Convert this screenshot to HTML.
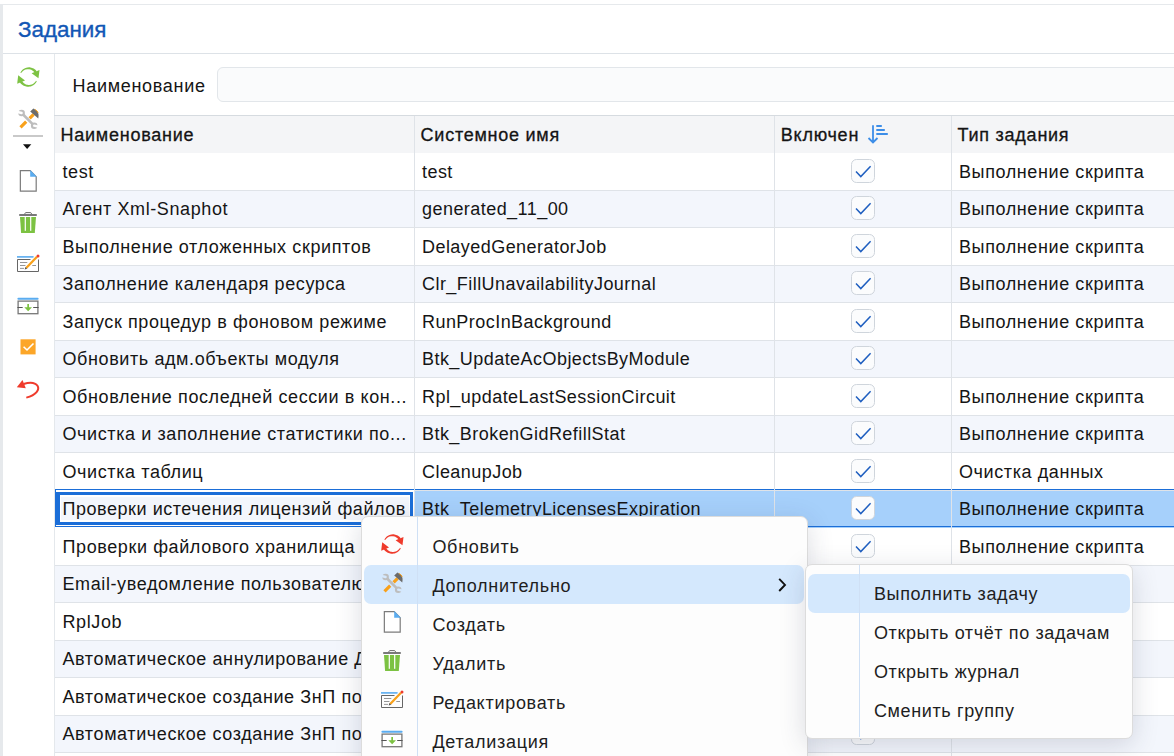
<!DOCTYPE html>
<html><head><meta charset="utf-8">
<style>
*{box-sizing:border-box;margin:0;padding:0}
html,body{width:1174px;height:756px;overflow:hidden;background:#fff}
body{position:relative;font-family:"Liberation Sans",sans-serif;color:#151515}
.abs{position:absolute}
#topline{left:0;top:4px;width:1174px;height:1px;background:#e6e9ec}
#leftstrip{left:0;top:4px;width:3px;height:752px;background:#e6e9ec}
#title{left:18px;top:18px;font-size:22.4px;line-height:24px;color:#1257b5;letter-spacing:0px;-webkit-text-stroke:0.35px #1257b5}
#hsep{left:3px;top:53px;width:1171px;height:1px;background:#dde2e7}
#vsep{left:54px;top:54px;width:1px;height:702px;background:#e4e8ec}
#flabel{left:72.5px;top:76px;font-size:18px;line-height:20px;letter-spacing:0.7px}
#finput{left:217.3px;top:67.2px;width:1000px;height:35px;border:1px solid #e2e6ea;border-radius:6px;background:#fafbfc}
#tline{left:54px;top:115px;width:1120px;height:1px;background:#d6dbe0}
#thead{left:55px;top:116px;width:1119px;height:36.8px;background:#f4f5f7}
.th{position:absolute;top:9.3px;font-size:18px;line-height:20px;font-weight:normal;color:#141414;letter-spacing:0.75px;-webkit-text-stroke:0.3px #141414}
.colsep{position:absolute;top:116px;width:1px;height:640px;background:#dfe3e8}
.row{position:absolute;left:55px;width:1119px;height:37.5px;border-bottom:1px solid #dfe3e8;background:#fff}
.row.alt{background:#f3f6fc}
.row > div{position:absolute;top:0;height:36.5px;font-size:18px;line-height:20px;letter-spacing:0.6px;white-space:nowrap;overflow:hidden}
.row span{position:absolute;top:8.6px}
.c1{left:0;width:359px}
.c1 span{left:7.5px}
.c2{left:360px;width:359px}
.c2 span{left:7px;letter-spacing:0.45px}
.c3{left:720px;width:176px}
.c4{left:897px;width:222px}
.c4 span{left:7px}
.cb{position:absolute;left:76.2px;top:5.5px;width:23.5px;height:24px;border:1.4px solid #cfd5dc;border-radius:5.5px;background:#fbfcfd}
.cb svg{position:absolute;left:-1.4px;top:-1.4px}
.row.sel{background:#a6d0fb;border-bottom:none}
.row.sel .c1{background:#fff;left:0;top:-1.3px;width:360px;height:38.8px}
.row.sel .c1 .focus{position:absolute;left:1px;top:2px;width:357px;height:33.6px;border:3px solid #1b6ed8;border-left-width:4px;background:#f3f6fc;box-shadow:inset 1px 2px 0 0 #fff,inset -1px -2px 0 0 #fff}
.row.sel .c1 span{z-index:1;top:9.1px;letter-spacing:0.54px}
.row.sel .c2 span,.row.sel .c4 span{top:8px}
.row.sel .cb{top:5.6px}
.selline{position:absolute;left:55px;width:1119px;height:1px;background:#1b6ed8}
.ico{position:absolute;width:30px;height:30px}
#menu{left:360.9px;top:516.3px;width:447px;height:300px;background:#fdfdfd;border:1px solid #dcdcdc;border-radius:7px;box-shadow:0 6px 26px rgba(40,50,80,0.17)}
#menu .msep{position:absolute;left:55px;top:0;width:1px;height:300px;background:#cfe0f5}
.mi{position:absolute;font-size:18px;line-height:20px;letter-spacing:0.72px;color:#1e1e1e;white-space:nowrap}
#sub .mi{letter-spacing:0.62px}
.hl{position:absolute;background:#d4e8fd;border-radius:7px}
#sub{left:804.7px;top:563.6px;width:328.5px;height:175px;background:#fdfdfd;border:1px solid #dcdcdc;border-radius:7px;box-shadow:0 6px 26px rgba(40,50,80,0.17)}
#sub .msep{position:absolute;left:53.7px;top:0;width:1px;height:172px;background:#cfe0f5}
</style></head><body>
<svg width="0" height="0" style="position:absolute">
<defs>
<symbol id="i-refresh" viewBox="0 0 30 30">
 <path d="M6.38,10.68 L6.75,9.98 L7.18,9.31 L7.67,8.68 L8.21,8.09 L8.80,7.55 L9.44,7.06 L10.13,6.63 L10.85,6.25 L11.60,5.93 L12.38,5.68 L13.18,5.50 L14.00,5.39 L14.82,5.34 L15.65,5.37 L16.48,5.47 L17.30,5.64 L18.11,5.89 L18.89,6.20 L19.65,6.57 L20.37,7.02 L21.06,7.52 L21.70,8.09 L22.29,8.71 L22.83,9.38 L20.68,10.83 L20.32,10.30 L19.93,9.79 L19.48,9.32 L19.00,8.88 L18.48,8.49 L17.92,8.14 L17.33,7.84 L16.72,7.59 L16.08,7.39 L15.43,7.25 L14.76,7.16 L14.09,7.14 L13.41,7.16 L12.74,7.25 L12.07,7.40 L11.41,7.60 L10.77,7.86 L10.15,8.18 L9.56,8.55 L9.01,8.97 L8.48,9.44 L8.00,9.95 L7.56,10.51 L7.17,11.10 Z" fill="currentColor"/>
 <path d="M17.6,11.3 L25.5,8.1 L24.5,16.3 Z" fill="currentColor"/>
 <path d="M22.79,19.22 L22.41,19.96 L21.97,20.66 L21.46,21.32 L20.90,21.94 L20.28,22.51 L19.61,23.02 L18.90,23.48 L18.14,23.86 L17.35,24.19 L16.53,24.44 L15.69,24.62 L14.84,24.72 L13.98,24.75 L13.11,24.70 L12.25,24.57 L11.40,24.37 L10.56,24.09 L9.76,23.73 L8.98,23.31 L8.25,22.81 L7.55,22.26 L6.91,21.63 L6.33,20.96 L5.80,20.23 L8.03,18.89 L8.37,19.47 L8.76,20.02 L9.21,20.53 L9.69,21.01 L10.23,21.44 L10.80,21.82 L11.40,22.16 L12.04,22.44 L12.70,22.66 L13.38,22.82 L14.07,22.93 L14.78,22.97 L15.49,22.95 L16.20,22.87 L16.90,22.72 L17.58,22.51 L18.25,22.24 L18.90,21.91 L19.52,21.52 L20.10,21.07 L20.64,20.58 L21.14,20.03 L21.59,19.44 L21.98,18.81 Z" fill="currentColor"/>
 <path d="M4.2,13.2 L11,18.6 L3.2,21.8 Z" fill="currentColor"/>
</symbol>
<mask id="m-wr" maskUnits="userSpaceOnUse" x="0" y="0" width="30" height="30">
 <rect x="0" y="0" width="30" height="30" fill="#fff"/>
 <path d="M2,7.8 H7.6 A1.2,1.2 0 0 1 7.6,10.2 H2 Z" fill="#000" transform="rotate(15 7.6 9)"/>
 <path d="M26,20.5 H20.2 A1.2,1.2 0 0 0 20.2,22.9 H26 Z" fill="#000" transform="rotate(15 20.2 21.7)"/>
</mask>
<symbol id="i-tools" viewBox="0 0 30 30">
 <path d="M6.5,23.4 L12.2,17.7 M15.6,14.3 L19.6,10.3" stroke="#f8a11b" stroke-width="3.2" fill="none"/>
 <path d="M16.2,7.6 L19.4,4.6 L23.2,6.9 Q25.2,9.8 24.3,14.6 Z" fill="#6b6b6b"/>
 <path d="M20.9,5.4 Q23.6,6.8 24.2,9" stroke="#f8a11b" stroke-width="1" fill="none"/>
 <g fill="#bdbdbd" mask="url(#m-wr)">
  <path d="M8.6,10 L18.9,20.3" stroke="#bdbdbd" stroke-width="2.6"/>
  <circle cx="7.6" cy="9" r="3.3"/>
  <circle cx="20.2" cy="21.7" r="3.3"/>
 </g>
</symbol>
<symbol id="i-doc" viewBox="0 0 30 30">
 <path d="M6.35,4.6 H16.2 L22.2,10.7 V25.2 H6.35 Z" fill="#fff" stroke="#7b7b7b" stroke-width="1.2"/>
 <path d="M16.2,4 V10.7 H22.8 Z" fill="#5aacf0"/>
</symbol>
<symbol id="i-trash" viewBox="0 0 30 30">
 <rect x="5.2" y="7.1" width="17.6" height="1.8" fill="#6b6b6b"/>
 <path d="M10.5,7.2 L11.6,5.6 H16.7 L17.8,7.2" fill="none" stroke="#6b6b6b" stroke-width="1"/>
 <path d="M6,9.9 H22 L20.8,26 H7.1 Z" fill="#7cc242"/>
 <rect x="10.7" y="9.9" width="1.2" height="13.9" fill="#fff"/>
 <rect x="16.1" y="9.9" width="1.2" height="13.9" fill="#fff"/>
</symbol>
<symbol id="i-edit" viewBox="0 0 30 30">
 <rect x="3" y="8.1" width="16.6" height="1.6" fill="#5aacf0"/>
 <path d="M16.5,11.5 H3.5 V23.5 H24.5 V11.5" fill="none" stroke="#666" stroke-width="1"/>
 <path d="M6,14.5 H13.3 M6,17.5 H11.5 M18.3,17.5 H22 M6,20.4 H10" stroke="#8a8a8a" stroke-width="0.9"/>
 <path d="M12.2,20 L23,8.8" stroke="#fff" stroke-width="3.6"/><path d="M12.2,20 L23,8.8" stroke="#f8a11b" stroke-width="2.3"/>
 <path d="M10.7,21.4 L11.3,18.9 L13.2,20.8 Z" fill="#555"/>
 <circle cx="24" cy="7.9" r="1.5" fill="#ee3a2d"/>
</symbol>
<symbol id="i-detail" viewBox="0 0 30 30">
 <rect x="3.4" y="7.7" width="21.2" height="2" rx="1" fill="#5aacf0"/>
 <rect x="4.1" y="11.1" width="19.8" height="12.6" fill="#fff" stroke="#777" stroke-width="1.3"/>
 <path d="M3.4,17.5 H8.7 M19.2,17.5 H24.6" stroke="#555" stroke-width="1"/>
 <path d="M13.3,13.9 H15 V17.2 H18 L14.15,21.2 L10.3,17.2 H13.3 Z" fill="#7cc242"/>
</symbol>
<symbol id="i-check" viewBox="0 0 30 30">
 <rect x="6.5" y="7.3" width="15.1" height="15.1" fill="#fca628"/>
 <path d="M9.6,14.7 L13,18 L19.5,11.5" fill="none" stroke="#fff" stroke-width="1.6"/>
</symbol>
<symbol id="i-undo" viewBox="0 0 30 30">
 <path d="M2.8,13.3 L8.5,6.1 L11.8,14.3 Z" fill="#ef3b2c"/>
 <path d="M9.5,10 C15,8.3 21,8.2 23.5,11.8 C25.8,15.5 22.5,21 12.3,23.6" fill="none" stroke="#ef3b2c" stroke-width="2"/>
</symbol>
</defs></svg>

<div id="topline" class="abs"></div>
<div id="leftstrip" class="abs"></div>
<div id="title" class="abs">Задания</div>
<div id="hsep" class="abs"></div>
<div id="vsep" class="abs"></div>

<svg class="ico" style="left:14px;top:62px;color:#7dc243"><use href="#i-refresh"/></svg>
<svg class="ico" style="left:14px;top:104px"><use href="#i-tools"/></svg>
<div class="abs" style="left:13px;top:135.3px;width:30px;height:2px;background:#c9c9c9"></div>
<svg class="abs" style="left:22px;top:143px" width="10" height="7" viewBox="0 0 10 7"><path d="M1,1.3 H9.3 L5.15,6 Z" fill="#111"/></svg>
<svg class="ico" style="left:14px;top:166px"><use href="#i-doc"/></svg>
<svg class="ico" style="left:14px;top:207px"><use href="#i-trash"/></svg>
<svg class="ico" style="left:14px;top:248px"><use href="#i-edit"/></svg>
<svg class="ico" style="left:14px;top:290px"><use href="#i-detail"/></svg>
<svg class="ico" style="left:14px;top:332px"><use href="#i-check"/></svg>
<svg class="ico" style="left:14px;top:374px"><use href="#i-undo"/></svg>

<div id="flabel" class="abs">Наименование</div>
<div id="finput" class="abs"></div>

<div id="tline" class="abs"></div>
<div id="thead" class="abs">
 <div class="th" style="left:5.5px">Наименование</div>
 <div class="th" style="left:365.6px">Системное имя</div>
 <div class="th" style="left:725.8px">Включен</div>
 <svg class="abs" style="left:810px;top:8px" width="24" height="22" viewBox="0 0 24 22"><path d="M8,1.2 V18.5 M3.5,14 L8,18.5 L12.5,14" stroke="#3d8ee8" stroke-width="1.8" fill="none"/><path d="M11.3,2 H16.8 M11.3,6 H19.8 M11.3,10 H22.8" stroke="#3d8ee8" stroke-width="1.8" fill="none"/></svg>
 <div class="th" style="left:902.6px">Тип задания</div>
</div>

<div class="row" style="top:153.4px">
<div class="c1"><span>test</span></div>
<div class="c2"><span>test</span></div>
<div class="c3"><div class="cb"><svg width="24" height="24" viewBox="0 0 24 24"><path d="M5,12.6 L9.8,17.6 L19.6,7.3" fill="none" stroke="#1f5fc0" stroke-width="1.5"/></svg></div></div>
<div class="c4"><span>Выполнение скрипта</span></div>
</div>
<div class="row alt" style="top:190.9px">
<div class="c1"><span>Агент Xml-Snaphot</span></div>
<div class="c2"><span>generated_11_00</span></div>
<div class="c3"><div class="cb"><svg width="24" height="24" viewBox="0 0 24 24"><path d="M5,12.6 L9.8,17.6 L19.6,7.3" fill="none" stroke="#1f5fc0" stroke-width="1.5"/></svg></div></div>
<div class="c4"><span>Выполнение скрипта</span></div>
</div>
<div class="row" style="top:228.4px">
<div class="c1"><span>Выполнение отложенных скриптов</span></div>
<div class="c2"><span>DelayedGeneratorJob</span></div>
<div class="c3"><div class="cb"><svg width="24" height="24" viewBox="0 0 24 24"><path d="M5,12.6 L9.8,17.6 L19.6,7.3" fill="none" stroke="#1f5fc0" stroke-width="1.5"/></svg></div></div>
<div class="c4"><span>Выполнение скрипта</span></div>
</div>
<div class="row alt" style="top:265.9px">
<div class="c1"><span>Заполнение календаря ресурса</span></div>
<div class="c2"><span>Clr_FillUnavailabilityJournal</span></div>
<div class="c3"><div class="cb"><svg width="24" height="24" viewBox="0 0 24 24"><path d="M5,12.6 L9.8,17.6 L19.6,7.3" fill="none" stroke="#1f5fc0" stroke-width="1.5"/></svg></div></div>
<div class="c4"><span>Выполнение скрипта</span></div>
</div>
<div class="row" style="top:303.4px">
<div class="c1"><span>Запуск процедур в фоновом режиме</span></div>
<div class="c2"><span>RunProcInBackground</span></div>
<div class="c3"><div class="cb"><svg width="24" height="24" viewBox="0 0 24 24"><path d="M5,12.6 L9.8,17.6 L19.6,7.3" fill="none" stroke="#1f5fc0" stroke-width="1.5"/></svg></div></div>
<div class="c4"><span>Выполнение скрипта</span></div>
</div>
<div class="row alt" style="top:340.9px">
<div class="c1"><span>Обновить адм.объекты модуля</span></div>
<div class="c2"><span>Btk_UpdateAcObjectsByModule</span></div>
<div class="c3"><div class="cb"><svg width="24" height="24" viewBox="0 0 24 24"><path d="M5,12.6 L9.8,17.6 L19.6,7.3" fill="none" stroke="#1f5fc0" stroke-width="1.5"/></svg></div></div>
<div class="c4"><span></span></div>
</div>
<div class="row" style="top:378.4px">
<div class="c1"><span>Обновление последней сессии в кон...</span></div>
<div class="c2"><span>Rpl_updateLastSessionCircuit</span></div>
<div class="c3"><div class="cb"><svg width="24" height="24" viewBox="0 0 24 24"><path d="M5,12.6 L9.8,17.6 L19.6,7.3" fill="none" stroke="#1f5fc0" stroke-width="1.5"/></svg></div></div>
<div class="c4"><span>Выполнение скрипта</span></div>
</div>
<div class="row alt" style="top:415.9px">
<div class="c1"><span>Очистка и заполнение статистики по...</span></div>
<div class="c2"><span>Btk_BrokenGidRefillStat</span></div>
<div class="c3"><div class="cb"><svg width="24" height="24" viewBox="0 0 24 24"><path d="M5,12.6 L9.8,17.6 L19.6,7.3" fill="none" stroke="#1f5fc0" stroke-width="1.5"/></svg></div></div>
<div class="c4"><span>Выполнение скрипта</span></div>
</div>
<div class="row" style="top:453.4px">
<div class="c1"><span>Очистка таблиц</span></div>
<div class="c2"><span>CleanupJob</span></div>
<div class="c3"><div class="cb"><svg width="24" height="24" viewBox="0 0 24 24"><path d="M5,12.6 L9.8,17.6 L19.6,7.3" fill="none" stroke="#1f5fc0" stroke-width="1.5"/></svg></div></div>
<div class="c4"><span>Очистка данных</span></div>
</div>
<div class="row alt sel" style="top:490.9px">
<div class="c1"><div class="focus"></div><span>Проверки истечения лицензий файлов</span></div>
<div class="c2"><span>Btk_TelemetryLicensesExpiration</span></div>
<div class="c3"><div class="cb"><svg width="24" height="24" viewBox="0 0 24 24"><path d="M5,12.6 L9.8,17.6 L19.6,7.3" fill="none" stroke="#1f5fc0" stroke-width="1.5"/></svg></div></div>
<div class="c4"><span>Выполнение скрипта</span></div>
</div>
<div class="selline" style="top:488.6px"></div>
<div class="selline" style="top:526.4px"></div>
<div class="selline" style="top:488.6px;width:1px;height:38.8px"></div>
<div class="row" style="top:528.4px">
<div class="c1"><span>Проверки файлового хранилища</span></div>
<div class="c2"><span></span></div>
<div class="c3"><div class="cb"><svg width="24" height="24" viewBox="0 0 24 24"><path d="M5,12.6 L9.8,17.6 L19.6,7.3" fill="none" stroke="#1f5fc0" stroke-width="1.5"/></svg></div></div>
<div class="c4"><span>Выполнение скрипта</span></div>
</div>
<div class="row alt" style="top:565.9px">
<div class="c1"><span>Email-уведомление пользователю о</span></div>
<div class="c2"><span></span></div>
<div class="c3"><div class="cb"><svg width="24" height="24" viewBox="0 0 24 24"><path d="M5,12.6 L9.8,17.6 L19.6,7.3" fill="none" stroke="#1f5fc0" stroke-width="1.5"/></svg></div></div>
<div class="c4"><span></span></div>
</div>
<div class="row" style="top:603.4px">
<div class="c1"><span>RplJob</span></div>
<div class="c2"><span></span></div>
<div class="c3"><div class="cb"><svg width="24" height="24" viewBox="0 0 24 24"><path d="M5,12.6 L9.8,17.6 L19.6,7.3" fill="none" stroke="#1f5fc0" stroke-width="1.5"/></svg></div></div>
<div class="c4"><span></span></div>
</div>
<div class="row alt" style="top:640.9px">
<div class="c1"><span>Автоматическое аннулирование Док</span></div>
<div class="c2"><span></span></div>
<div class="c3"><div class="cb"><svg width="24" height="24" viewBox="0 0 24 24"><path d="M5,12.6 L9.8,17.6 L19.6,7.3" fill="none" stroke="#1f5fc0" stroke-width="1.5"/></svg></div></div>
<div class="c4"><span></span></div>
</div>
<div class="row" style="top:678.4px">
<div class="c1"><span>Автоматическое создание ЗнП по</span></div>
<div class="c2"><span></span></div>
<div class="c3"><div class="cb"><svg width="24" height="24" viewBox="0 0 24 24"><path d="M5,12.6 L9.8,17.6 L19.6,7.3" fill="none" stroke="#1f5fc0" stroke-width="1.5"/></svg></div></div>
<div class="c4"><span></span></div>
</div>
<div class="row alt" style="top:715.9px">
<div class="c1"><span>Автоматическое создание ЗнП по</span></div>
<div class="c2"><span></span></div>
<div class="c3"><div class="cb"><svg width="24" height="24" viewBox="0 0 24 24"><path d="M5,12.6 L9.8,17.6 L19.6,7.3" fill="none" stroke="#1f5fc0" stroke-width="1.5"/></svg></div></div>
<div class="c4"><span></span></div>
</div>

<div class="colsep" style="left:414px"></div>
<div class="colsep" style="left:774px"></div>
<div class="colsep" style="left:951px"></div>

<div id="menu" class="abs">
 <div class="hl" style="left:2.5px;top:47.4px;width:439.5px;height:39.6px"></div>
 <div class="msep"></div>
 <svg class="ico" style="left:16.1px;top:11.7px;color:#ef3b2c"><use href="#i-refresh"/></svg>
 <svg class="ico" style="left:16.1px;top:50.7px"><use href="#i-tools"/></svg>
 <svg class="ico" style="left:16.1px;top:89.7px"><use href="#i-doc"/></svg>
 <svg class="ico" style="left:16.1px;top:127.7px"><use href="#i-trash"/></svg>
 <svg class="ico" style="left:16.1px;top:166.7px"><use href="#i-edit"/></svg>
 <svg class="ico" style="left:16.1px;top:205.7px"><use href="#i-detail"/></svg>
 <div class="mi" style="left:70.5px;top:19.5px">Обновить</div>
 <div class="mi" style="left:70.5px;top:58.5px">Дополнительно</div>
 <div class="mi" style="left:70.5px;top:97.5px">Создать</div>
 <div class="mi" style="left:70.5px;top:136.5px">Удалить</div>
 <div class="mi" style="left:70.5px;top:175.5px">Редактировать</div>
 <div class="mi" style="left:70.5px;top:214.5px">Детализация</div>
 <svg class="abs" style="left:414.8px;top:60px" width="10" height="16" viewBox="0 0 10 16"><path d="M2.2,1.8 L8,7.9 L2.2,14" stroke="#111" stroke-width="1.9" fill="none"/></svg>
</div>

<div id="sub" class="abs">
 <div class="hl" style="left:2.4px;top:9.5px;width:322px;height:38.6px"></div>
 <div class="msep"></div>
 <div class="mi" style="left:68.3px;top:19px">Выполнить задачу</div>
 <div class="mi" style="left:68.3px;top:58px">Открыть отчёт по задачам</div>
 <div class="mi" style="left:68.3px;top:97px">Открыть журнал</div>
 <div class="mi" style="left:68.3px;top:136px">Сменить группу</div>
</div>

</body></html>
